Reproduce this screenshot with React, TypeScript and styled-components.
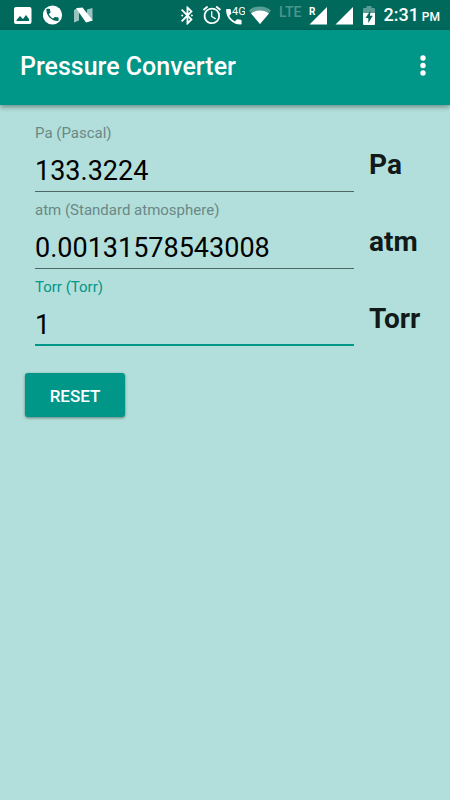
import React, { useState } from "react";
import styled, { createGlobalStyle } from "styled-components";

const GlobalStyle = createGlobalStyle`
  * { box-sizing: border-box; }
  body {
    margin: 0;
    background: #b2dfdb;
    font-family: Roboto, "Liberation Sans", sans-serif;
  }
`;

const Page = styled.div`
  min-height: 100vh;
  background: #b2dfdb;
`;

const StatusBar = styled.div`
  display: flex;
  align-items: center;
  justify-content: space-between;
  height: 30px;
  padding: 0 10px 0 14px;
  background: #00695c;
  color: #fff;
`;

const StatusGroup = styled.div<{ $gap: number }>`
  display: flex;
  align-items: center;
  gap: ${(p) => p.$gap}px;
  height: 30px;
`;

const Glyph = styled.svg`
  display: block;
  flex: none;
  fill: currentColor;
`;

const NetworkType = styled.span`
  align-self: flex-start;
  padding-top: 4px;
  color: #4d968d;
  font-size: 14px;
  font-weight: 500;
  line-height: 16px;
`;

const Clock = styled.time`
  font-size: 18px;
  font-weight: 500;
  line-height: 30px;
  white-space: nowrap;
  padding-top: 2px;
`;

const Meridiem = styled.small`
  font-size: 12px;
`;

const AppBar = styled.header`
  display: flex;
  align-items: center;
  justify-content: space-between;
  height: 75px;
  padding: 0 15px 2px 20px;
  background: #009688;
  color: #fff;
  box-shadow: 0 2px 5px rgba(0, 0, 0, 0.38);
`;

const Title = styled.h1`
  margin: 0;
  font-size: 25px;
  font-weight: 500;
  line-height: 32px;
`;

const MenuButton = styled.button`
  display: flex;
  align-items: center;
  justify-content: center;
  width: 24px;
  height: 48px;
  padding: 0;
  border: 0;
  background: none;
  color: #fff;
`;

const Form = styled.form`
  display: flex;
  flex-direction: column;
  align-items: flex-start;
  padding: 20px 0;
`;

const Row = styled.div`
  display: grid;
  grid-template-columns: 1fr 81px;
  column-gap: 15px;
  width: 100%;
  height: 77px;
  padding-left: 35px;
`;

const Field = styled.div`
  display: flex;
  flex-direction: column;
  min-width: 0;
`;

const Label = styled.label<{ $active: boolean }>`
  color: ${(p) => (p.$active ? "#009688" : "#6b8885")};
  font-size: 15px;
  line-height: 16px;
`;

const Input = styled.input<{ $active: boolean }>`
  width: 100%;
  height: 51px;
  padding: 8px 0 0;
  border: 0;
  border-radius: 0;
  background: none;
  box-shadow: inset 0 ${(p) => (p.$active ? "-2px #009688" : "-1px #4f6664")};
  color: #000;
  font-family: inherit;
  font-size: 27px;
  outline: none;
`;

const Unit = styled.span`
  padding-top: 24px;
  color: #111a19;
  font-size: 28px;
  font-weight: 700;
  line-height: 32px;
`;

const ResetButton = styled.button`
  min-width: 100px;
  height: 44px;
  margin: 17px 25px;
  padding: 2px 16px 0;
  border: 0;
  border-radius: 3px;
  background: #009688;
  color: #fff;
  box-shadow: 0 1px 3px rgba(0, 0, 0, 0.45);
  font-family: inherit;
  font-size: 17px;
  font-weight: 500;
`;

const PhotoIcon = () => (
  <Glyph width="18" height="17" viewBox="0 0 18 17">
    <path fillRule="evenodd" d="M2 0h13.500a2 2 0 0 1 2 2v13a2 2 0 0 1-2 2H2a2 2 0 0 1-2-2V2a2 2 0 0 1 2-2zM2.500 14h12.500v-2l-3-4-3 4-3-3-3.500 4z" />
  </Glyph>
);

const handset =
  "M6.620 10.790c1.440 2.830 3.760 5.140 6.590 6.590l2.200-2.200c.270-.270.670-.360 1.020-.240 1.120.370 2.330.570 3.570.570.550 0 1 .450 1 1V20c0 .550-.450 1-1 1-9.390 0-17-7.610-17-17 0-.550.450-1 1-1h3.500c.550 0 1 .450 1 1 0 1.250.200 2.450.570 3.570.110.350.030.740-.250 1.020l-2.200 2.200z";

const CallBadgeIcon = () => (
  <Glyph width="20" height="20" viewBox="0 0 20 20">
    <circle cx="9.500" cy="10" r="9.600" />
    <path fill="#00695c" transform="translate(1.300 1.800) scale(.68)" d={handset} />
  </Glyph>
);

const NougatIcon = () => (
  <Glyph width="20" height="16" viewBox="0 0 20 16">
    <path opacity=".6" d="M0 3l5-2.500V13.500L0 15.500zM13 2.500l5.500-1.500V13L13 15z" />
    <path d="M2 1.200L8.500 .500 18.800 13.500 12 15.500z" />
  </Glyph>
);

const BluetoothIcon = () => (
  <Glyph width="12" height="19" viewBox="5 2 13 20">
    <path d="M17.710 7.710L12 2h-1v7.590L6.410 5 5 6.410 10.590 12 5 17.590 6.410 19 11 14.410V22h1l5.710-5.710-4.300-4.290 4.300-4.290zM13 5.830l1.880 1.880L13 9.590V5.830zm1.880 10.460L13 18.170v-3.760l1.880 1.880z" />
    <path d="M5 12l1.300-1.300L7.600 12l-1.300 1.300zM15.600 12l1.200-1.300L18 12l-1.200 1.300z" />
  </Glyph>
);

const AlarmIcon = () => (
  <Glyph width="20" height="20" viewBox="0 1 22 22">
    <path d="M22 5.720l-4.600-3.860-1.290 1.530 4.600 3.860L22 5.720zM7.880 3.390L6.600 1.860 2 5.710l1.290 1.530 4.590-3.850zM12.500 8H11v6l4.750 2.850.750-1.230-4-2.370V8zM12 4c-4.970 0-9 4.030-9 9s4.020 9 9 9a9 9 0 0 0 0-18zm0 16c-3.870 0-7-3.130-7-7s3.130-7 7-7 7 3.130 7 7-3.130 7-7 7z" />
  </Glyph>
);

const CallNetworkIcon = () => (
  <Glyph width="20" height="20" viewBox="0 0 20 20">
    <path transform="translate(-1.500 1.500) scale(.86)" d={handset} />
    <text x="7" y="10" fontSize="11">4G</text>
  </Glyph>
);

const WifiIcon = () => (
  <Glyph width="22" height="18" viewBox="0 0 22 18">
    <path opacity=".35" d="M0 4.500C6-1 16-1 22 4.500L11 18z" />
    <path d="M2 7.500C7 3.500 15 3.500 20 7.500L11 18z" />
  </Glyph>
);

const SignalIcon = ({ roaming = false }: { roaming?: boolean }) => (
  <Glyph width="18" height="20" viewBox="0 0 18 20">
    <path d="M18 2v17.500H.500z" />
    {roaming && (
      <text x="0" y="10" fontSize="10" fontWeight="700" stroke="#00695c" strokeWidth="2" paintOrder="stroke">
        R
      </text>
    )}
  </Glyph>
);

const BatteryIcon = () => (
  <Glyph width="14" height="19" viewBox="-2 0 14 19">
    <path opacity=".35" d="M3.500 0h5v2H11a1 1 0 0 1 1 1v4H0V3a1 1 0 0 1 1-1h2.500z" />
    <path d="M0 7h12v11a1 1 0 0 1-1 1H1a1 1 0 0 1-1-1z" />
    <path fill="#00695c" d="M7.500 4.500L2.500 12H5.300v5l4.500-7.300H7z" />
  </Glyph>
);

type UnitKey = "pa" | "atm" | "torr";

const units: { key: UnitKey; label: string; symbol: string; initial: string }[] = [
  { key: "pa", label: "Pa (Pascal)", symbol: "Pa", initial: "133.3224" },
  { key: "atm", label: "atm (Standard atmosphere)", symbol: "atm", initial: "0.00131578543008" },
  { key: "torr", label: "Torr (Torr)", symbol: "Torr", initial: "1" },
];

const pascals: Record<UnitKey, number> = { pa: 1, atm: 101325, torr: 133.3224 };

const initialValues = Object.fromEntries(units.map((u) => [u.key, u.initial])) as Record<UnitKey, string>;
const emptyValues: Record<UnitKey, string> = { pa: "", atm: "", torr: "" };

export default function App() {
  const [values, setValues] = useState(initialValues);
  const [active, setActive] = useState<UnitKey>("torr");

  const convert = (key: UnitKey, text: string) => {
    const amount = parseFloat(text);
    const next = { ...emptyValues };
    if (!Number.isNaN(amount)) {
      units.forEach((u) => {
        next[u.key] = String(Number(((amount * pascals[key]) / pascals[u.key]).toPrecision(12)));
      });
    }
    next[key] = text;
    setValues(next);
  };

  return (
    <Page>
      <GlobalStyle />
      <StatusBar>
        <StatusGroup $gap={11}>
          <PhotoIcon />
          <CallBadgeIcon />
          <NougatIcon />
        </StatusGroup>
        <StatusGroup $gap={8}>
          <BluetoothIcon />
          <StatusGroup $gap={4}>
            <AlarmIcon />
            <CallNetworkIcon />
            <WifiIcon />
          </StatusGroup>
          <NetworkType>LTE</NetworkType>
          <SignalIcon roaming />
          <SignalIcon />
          <BatteryIcon />
          <Clock>
            2:31<Meridiem> PM</Meridiem>
          </Clock>
        </StatusGroup>
      </StatusBar>
      <AppBar>
        <Title>Pressure Converter</Title>
        <MenuButton type="button" aria-label="More options">
          <Glyph width="6" height="24" viewBox="0 0 6 24">
            <circle cx="3" cy="3" r="2.700" />
            <circle cx="3" cy="10.500" r="2.700" />
            <circle cx="3" cy="18" r="2.700" />
          </Glyph>
        </MenuButton>
      </AppBar>
      <Form onSubmit={(e) => e.preventDefault()}>
        {units.map((u) => (
          <Row key={u.key}>
            <Field>
              <Label htmlFor={u.key} $active={active === u.key}>
                {u.label}
              </Label>
              <Input
                id={u.key}
                inputMode="decimal"
                value={values[u.key]}
                $active={active === u.key}
                onFocus={() => setActive(u.key)}
                onChange={(e) => convert(u.key, e.target.value)}
              />
            </Field>
            <Unit>{u.symbol}</Unit>
          </Row>
        ))}
        <ResetButton type="button" onClick={() => setValues(emptyValues)}>
          RESET
        </ResetButton>
      </Form>
    </Page>
  );
}
